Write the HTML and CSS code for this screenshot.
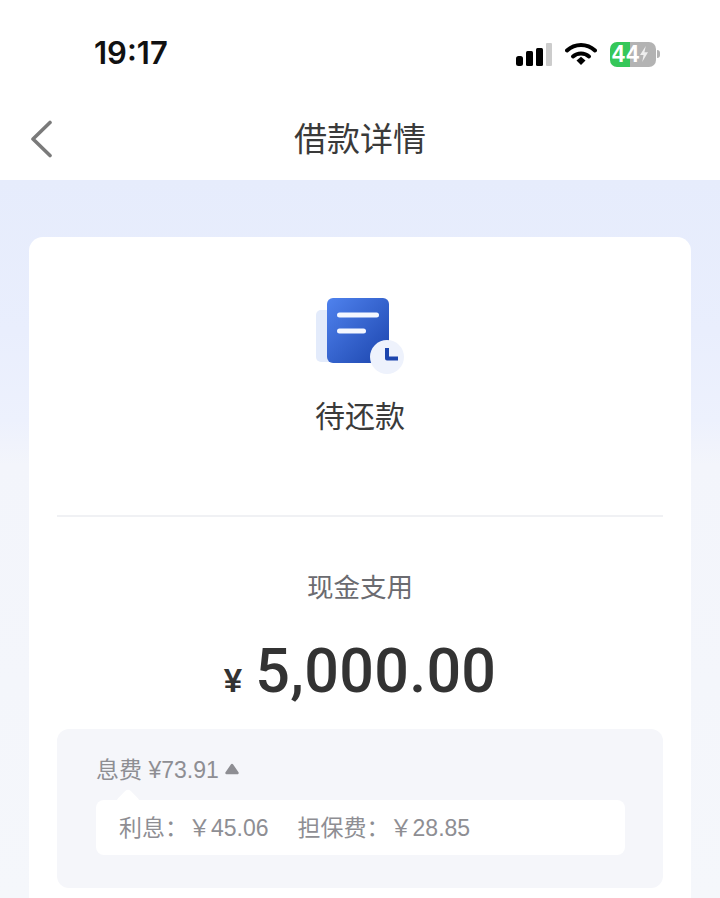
FILE: index.html
```html
<!DOCTYPE html>
<html lang="zh-CN">
<head>
    <meta charset="UTF-8">
    <meta name="viewport" content="width=device-width, initial-scale=1.0">
    <title>借款详情</title>
    <link rel="stylesheet" href="styles.css">
</head>
<body>
    <div class="status-bar">
        <span class="time">19:17</span>
        <div class="status-icons">
            <svg class="signal" width="36" height="23" viewBox="0 0 36 23">
                <rect x="0" y="13" width="7" height="10" rx="2.500" fill="#000"/>
                <rect x="10" y="8" width="7" height="15" rx="1.500" fill="#000"/>
                <rect x="20" y="5" width="7" height="18" rx="1.500" fill="#000"/>
                <rect x="30" y="0" width="6" height="23" rx="1" fill="#ccc"/>
            </svg>
            <svg class="wifi" width="32" height="24" viewBox="0 0 32 24">
                <path d="M2 8.500C10 1 22 1 30 8.500" fill="none" stroke="#000" stroke-width="4" stroke-linecap="round"/>
                <path d="M8 14.500C12.500 10.500 19.500 10.500 24 14.500" fill="none" stroke="#000" stroke-width="4" stroke-linecap="round"/>
                <path d="M11.500 18.500L16 14.800L20.500 18.500L16 23Z" fill="#000"/>
            </svg>
            <div class="battery">
                <div class="battery-body">
                    <span class="battery-num">44</span>
                    <svg class="bolt" width="10" height="16" viewBox="0 0 11 18"><path d="M7.500 0L1 10H5L3.500 18L10 7H6Z" fill="#eee"/></svg>
                </div>
                <span class="battery-cap"></span>
            </div>
        </div>
    </div>

    <div class="nav-bar">
        <svg class="back" width="24" height="38" viewBox="0 0 24 38">
            <path d="M21 2.500L4 19L21 35.500" fill="none" stroke="#7a7a7a" stroke-width="3.600" stroke-linecap="round" stroke-linejoin="round"/>
        </svg>
        <h1>借款详情</h1>
    </div>

    <div class="content">
        <div class="card">
            <div class="status-block">
                <svg class="status-icon" width="88" height="76" viewBox="0 0 88 76">
                    <defs>
                        <linearGradient id="docFill" x1="0" y1="0" x2="1" y2="1">
                            <stop offset="0" stop-color="#4f82ee"/>
                            <stop offset="1" stop-color="#1c45ad"/>
                        </linearGradient>
                    </defs>
                    <rect x="0" y="12" width="30" height="52" rx="5" fill="#e3ebfb"/>
                    <rect x="11" y="0" width="62" height="65" rx="6" fill="url(#docFill)"/>
                    <rect x="21" y="14.500" width="42" height="5" rx="2.500" fill="#f4f7ff"/>
                    <rect x="21" y="30.500" width="29" height="5" rx="2.500" fill="#f4f7ff"/>
                    <circle cx="71" cy="59" r="17" fill="#eef2fc"/>
                    <path d="M71 50V60.500H82" fill="none" stroke="#1c45ad" stroke-width="4" stroke-linejoin="round"/>
                </svg>
                <div class="status-text">待还款</div>
            </div>

            <div class="amount-block">
                <div class="amount-label">现金支用</div>
                <div class="amount"><span class="currency">¥</span>5,000.00</div>
            </div>

            <div class="fee-box">
                <div class="fee-title">
                    息费 ¥73.91
                    <svg class="fee-caret" width="14" height="12" viewBox="0 0 14 12"><path d="M7 2L12.500 10H1.500Z" fill="#8e8e93" stroke="#8e8e93" stroke-width="2.400" stroke-linejoin="round"/></svg>
                </div>
                <div class="fee-detail">
                    <span>利息：￥45.06</span>
                    <span>担保费：￥28.85</span>
                </div>
            </div>
        </div>
    </div>
</body>
</html>
```
FILE: styles.css
```css
* {
    box-sizing: border-box;
}
html, body {
    height: 100%;
}
body {
    margin: 0;
    height: 898px;
    overflow: hidden;
    background-color: #fff;
    color: #333;
    font-family: "Liberation Sans", "Noto Sans CJK SC", sans-serif;
}
.status-bar {
    height: 96px;
    padding: 32px 60px 0 94px;
    display: flex;
    justify-content: space-between;
    align-items: flex-start;
}
.time {
    font-family: Inter, "Liberation Sans", sans-serif;
    font-size: 31px;
    font-weight: 600;
    line-height: 42px;
    color: #111;
}
.status-icons {
    display: flex;
    align-items: center;
    gap: 13px;
    height: 44px;
}
.battery {
    display: flex;
    align-items: center;
    gap: 1px;
}
.battery-body {
    width: 46px;
    height: 25px;
    border-radius: 7px;
    background: linear-gradient(to right, #35c759 0 44%, #b3b3b3 44% 100%);
    display: flex;
    align-items: center;
    padding-left: 2px;
}
.battery-num {
    font-size: 23px;
    font-weight: 700;
    color: #fff;
    letter-spacing: 1.500px;
    line-height: 25px;
    flex-shrink: 0;
}
.bolt {
    flex-shrink: 0;
    margin-left: -2px;
}
.battery-cap {
    width: 3px;
    height: 8px;
    border-radius: 0 3px 3px 0;
    background-color: #b3b3b3;
}
.nav-bar {
    height: 84px;
    padding-bottom: 2px;
    display: flex;
    align-items: center;
    justify-content: center;
    position: relative;
}
.nav-bar h1 {
    margin: 0;
    font-size: 33px;
    font-weight: 400;
    color: #3a3a3a;
}
.back {
    position: absolute;
    left: 29px;
    top: 24px;
}
.content {
    height: 718px;
    padding: 57px 29px 0;
    background: linear-gradient(to bottom, #e6ecfc 0, #e9eefd 150px, #edf1fd 240px, #f3f5fb 285px, #f5f7fb 100%);
}
.card {
    height: 700px;
    padding: 0 28px;
    background-color: #fff;
    border-radius: 14px;
}
.status-block {
    height: 280px;
    padding-top: 61px;
    border-bottom: 2px solid #f0f1f4;
    display: flex;
    flex-direction: column;
    align-items: center;
}
.status-text {
    margin-top: 21px;
    font-size: 30px;
    line-height: 44px;
    color: #3a3a3a;
}
.amount-block {
    padding-top: 52px;
    text-align: center;
}
.amount-label {
    font-size: 26.500px;
    line-height: 38px;
    color: #6b6b70;
}
.amount {
    margin-top: 28px;
    font-family: Roboto, "Liberation Sans", sans-serif;
    font-size: 61px;
    font-weight: 500;
    line-height: 72px;
    letter-spacing: 0.300px;
    color: #333;
}
.currency {
    font-family: "Liberation Sans", sans-serif;
    font-size: 33px;
    font-weight: 700;
    line-height: 1;
    margin-right: 13px;
}
.fee-box {
    margin-top: 22px;
    height: 159px;
    padding: 23px 38px 0 39px;
    background-color: #f5f6fa;
    border-radius: 12px;
}
.fee-title {
    font-size: 23px;
    line-height: 36px;
    color: #8e8e93;
    display: flex;
    align-items: center;
    gap: 6px;
}
.fee-caret {
    flex-shrink: 0;
    margin-top: -2px;
}
.fee-detail {
    position: relative;
    margin-top: 12px;
    height: 55px;
    padding: 0 0 4px 23px;
    display: flex;
    align-items: center;
    gap: 29px;
    background-color: #fff;
    border-radius: 8px;
    font-size: 23px;
    color: #8e8e93;
}
.fee-detail::before {
    content: "";
    position: absolute;
    left: 23px;
    top: -8px;
    width: 18px;
    height: 18px;
    background-color: #fff;
    border-radius: 4px;
    transform: rotate(45deg);
}
```
